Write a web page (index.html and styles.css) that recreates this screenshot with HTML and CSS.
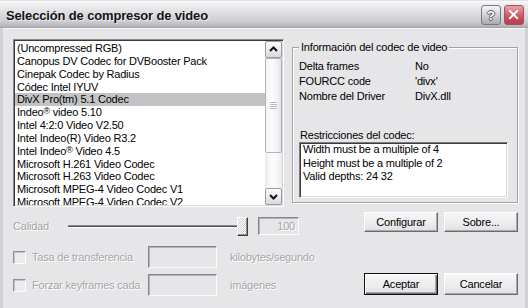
FILE: index.html
```html
<!DOCTYPE html>
<html lang="es">
<head>
<meta charset="utf-8">
<title>Selección de compresor de video</title>
<link rel="stylesheet" href="styles.css">
</head>
<body>
<div class="window">
  <div class="titlebar">
    <span class="title">Selección de compresor de video</span>
    <div class="caption-buttons">
      <span class="cap-btn help">?</span>
      <span class="cap-btn close">
        <svg width="20" height="20" viewBox="0 0 20 20"><path d="M5.5 5.5 L13.5 13.5 M13.5 5.5 L5.5 13.5" stroke="#fff" stroke-width="2.2" stroke-linecap="square" fill="none"/></svg>
      </span>
    </div>
  </div>
  <div class="frame">
    <div class="top">
      <div class="listbox">
        <ul class="items">
          <li>(Uncompressed RGB)</li>
          <li>Canopus DV Codec for DVBooster Pack</li>
          <li>Cinepak Codec by Radius</li>
          <li>Códec Intel IYUV</li>
          <li class="selected">DivX Pro(tm) 5.1 Codec</li>
          <li>Indeo<span class="reg">®</span> video 5.10</li>
          <li>Intel 4:2:0 Video V2.50</li>
          <li>Intel Indeo(R) Video R3.2</li>
          <li>Intel Indeo<span class="reg">®</span> Video 4.5</li>
          <li>Microsoft H.261 Video Codec</li>
          <li>Microsoft H.263 Video Codec</li>
          <li>Microsoft MPEG-4 Video Codec V1</li>
          <li>Microsoft MPEG-4 Video Codec V2</li>
        </ul>
        <div class="scrollbar">
          <div class="sb-btn">
            <svg width="15" height="15" viewBox="0 0 15 15"><path d="M4 9 L7.5 5.5 L11 9" stroke="#111" stroke-width="2" fill="none"/></svg>
          </div>
          <div class="sb-thumb"><span class="grip"></span></div>
          <div class="sb-track"></div>
          <div class="sb-btn">
            <svg width="15" height="15" viewBox="0 0 15 15"><path d="M4 6 L7.5 9.5 L11 6" stroke="#111" stroke-width="2" fill="none"/></svg>
          </div>
        </div>
      </div>
      <div class="group">
        <div class="legend">Información del codec de video</div>
        <div class="info">
          <span>Delta frames</span><span>No</span>
          <span>FOURCC code</span><span>'divx'</span>
          <span>Nombre del Driver</span><span>DivX.dll</span>
        </div>
        <div class="restr-label">Restricciones del codec:</div>
        <div class="restr-box">
          <div>Width must be a multiple of 4</div>
          <div>Height must be a multiple of 2</div>
          <div>Valid depths: 24 32</div>
        </div>
      </div>
    </div>
    <div class="bottom">
      <div class="controls">
        <div class="row row-quality">
          <span class="dis lbl-quality">Calidad</span>
          <div class="slider"><span class="track"></span><span class="thumb"></span></div>
          <span class="edit edit-q dis">100</span>
        </div>
        <div class="row row-rate">
          <span class="check"></span>
          <span class="dis lbl-check">Tasa de transferencia</span>
          <span class="edit edit-w"></span>
          <span class="dis unit">kilobytes/segundo</span>
        </div>
        <div class="row row-key">
          <span class="check"></span>
          <span class="dis lbl-check">Forzar keyframes cada</span>
          <span class="edit edit-w"></span>
          <span class="dis unit">imágenes</span>
        </div>
      </div>
      <div class="buttons">
        <button class="btn">Configurar</button>
        <button class="btn">Sobre...</button>
        <button class="btn default">Aceptar</button>
        <button class="btn">Cancelar</button>
      </div>
    </div>
  </div>
</div>
</body>
</html>
```

FILE: styles.css
```css
html, body {
  margin: 0;
  padding: 0;
}

body {
  width: 528px;
  height: 308px;
  overflow: hidden;
  font-family: "Liberation Sans", Arial, sans-serif;
  font-size: 11px;
  letter-spacing: -0.2px;
  color: #000;
}

.window {
  width: 528px;
  height: 308px;
  display: flex;
  flex-direction: column;
  background: #e6e6e8;
}

/* ---------- title bar ---------- */
.titlebar {
  flex: none;
  height: 28px;
  box-sizing: border-box;
  padding: 2px 4px 0 6px;
  display: flex;
  align-items: center;
  background: linear-gradient(#c8c8cc 0px, #fdfdfd 1px, #f2f2f4 3px, #e6e6e9 9px, #dadade 15px, #cdcdd2 21px, #bdbdc3 25px, #aeaeb4 27px, #9c9ca2 28px);
}

.title {
  flex: 1;
  margin-top: 1px;
  font-size: 13px;
  font-weight: bold;
  letter-spacing: -0.15px;
  color: #141414;
  text-shadow: 1px 1px 0 rgba(255, 255, 255, 0.6);
}

.caption-buttons {
  display: flex;
  gap: 3px;
}

.cap-btn {
  width: 20px;
  height: 20px;
  box-sizing: border-box;
  border-radius: 3px;
  display: flex;
  align-items: center;
  justify-content: center;
}

.help {
  border: 1px solid #7a7a82;
  background: linear-gradient(#f6f6f8, #d6d6da 45%, #b9b9c0 80%, #a9a9b0);
  font-size: 13px;
  font-weight: bold;
  color: #fff;
  letter-spacing: 0;
  text-shadow: -1px 0 #5a5a60, 1px 0 #5a5a60, 0 -1px #5a5a60, 0 1px #5a5a60;
}

.close {
  border: 1px solid #a4505a;
  background: linear-gradient(#eaa3aa, #d46b76 40%, #c44a58 70%, #b8404e);
}

.close svg {
  display: block;
}

/* ---------- frame ---------- */
.frame {
  flex: 1;
  display: flex;
  flex-direction: column;
  border-left: 3px solid #d2d2d6;
  border-right: 3px solid #d2d2d6;
  padding: 11px 7px 0 10px;
  box-shadow: inset 0 1px 0 #f6f6f8;
}

.top {
  flex: none;
  height: 172px;
  display: flex;
  align-items: flex-start;
  gap: 8px;
}

/* ---------- list box ---------- */
.listbox {
  width: 271px;
  height: 168px;
  box-sizing: border-box;
  padding: 1px;
  border: 1px solid;
  border-color: #8a8a8a #fdfdfd #fdfdfd #8a8a8a;
  box-shadow: inset 1px 1px 0 #3c3c3c, inset -1px -1px 0 #d8d8da;
  background: #fff;
  display: flex;
  overflow: hidden;
}

.items {
  flex: 1;
  margin: 0;
  padding: 1px 0 0 0;
  list-style: none;
  overflow: hidden;
  line-height: 12.85px;
  white-space: nowrap;
}

.items li {
  padding-left: 2px;
}

.items li.selected {
  background: #c3c3c5;
}

.reg {
  font-size: 9px;
  vertical-align: 2px;
  line-height: 0;
}

.scrollbar {
  width: 17px;
  flex: none;
  display: flex;
  flex-direction: column;
  background: linear-gradient(to right, #ebebee, #fbfbfc 35%, #fafafb 65%, #eaeaed);
}

.sb-btn {
  flex: none;
  height: 17px;
  box-sizing: border-box;
  border: 1px solid #9c9ca4;
  border-radius: 2px;
  background: linear-gradient(#fdfdfd, #e8e8ec 60%, #d8d8de);
  display: flex;
  align-items: center;
  justify-content: center;
}

.sb-btn svg {
  display: block;
}

.sb-thumb {
  flex: none;
  height: 95px;
  box-sizing: border-box;
  border: 1px solid #b2b2ba;
  border-radius: 2px;
  background: linear-gradient(to right, #f4f4f6, #fcfcfd 40%, #f0f0f3 80%, #e2e2e6);
  display: flex;
  align-items: center;
  justify-content: center;
}

.grip {
  width: 7px;
  height: 7px;
  background: repeating-linear-gradient(#b8b8c0 0 1px, #fff 1px 2px);
}

.sb-track {
  flex: 1;
}

/* ---------- group box ---------- */
.group {
  width: 226px;
  height: 156px;
  margin-top: 8px;
  box-sizing: border-box;
  padding: 0 8px 0 6px;
  border: 1px solid #a2a2a6;
  box-shadow: inset 1px 1px 0 #fff, 1px 1px 0 #fff;
}

.legend {
  display: table;
  margin: -7px 0 0 0;
  padding: 0 2px;
  line-height: 13px;
  background: #e6e6e8;
}

.info {
  margin-top: 5px;
  display: grid;
  grid-template-columns: 116px auto;
  line-height: 15px;
}

.restr-label {
  margin-top: 25px;
  padding-left: 1px;
  line-height: 13px;
}

.restr-box {
  width: 209px;
  height: 56px;
  box-sizing: border-box;
  padding: 0 3px;
  border: 1px solid;
  border-color: #7c7c7c #fdfdfd #fdfdfd #7c7c7c;
  box-shadow: inset 1px 1px 0 #3c3c3c, inset -1px -1px 0 #d8d8da;
  background: #fff;
  line-height: 13.5px;
}

/* ---------- bottom controls ---------- */
.bottom {
  flex: none;
  display: flex;
}

.controls {
  width: 351px;
  display: flex;
  flex-direction: column;
}

.row {
  display: flex;
  align-items: center;
}

.row-quality { height: 30px; }
.row-rate { height: 32px; }
.row-key { height: 24px; }

.dis {
  color: #a6a6a8;
  text-shadow: 1px 1px 0 #fff;
}

.lbl-quality {
  width: 55px;
  flex: none;
}

.slider {
  width: 180px;
  flex: none;
  display: flex;
  align-items: center;
}

.track {
  width: 177px;
  height: 1px;
  border-top: 1px solid #8c8c90;
  border-bottom: 1px solid #fff;
  background: #505054;
}

.thumb {
  width: 11px;
  height: 19px;
  margin-left: -8px;
  box-sizing: border-box;
  border: 1px solid;
  border-color: #fff #404040 #404040 #fff;
  box-shadow: inset -1px -1px 0 #8c8c8c;
  background: repeating-conic-gradient(#ffffff 0 25%, #d0d0d2 0 50%) 0 0 / 2px 2px;
}

.edit {
  flex: none;
  box-sizing: border-box;
  border: 1px solid;
  border-color: #858588 #fcfcfc #fcfcfc #858588;
  box-shadow: inset 1px 1px 0 #b4b4b8;
  background: #e6e6e8;
}

.edit-q {
  width: 41px;
  height: 18px;
  margin-left: 10px;
  padding-right: 3px;
  text-align: right;
  line-height: 16px;
}

.edit-w {
  width: 69px;
  height: 22px;
}

.check {
  flex: none;
  width: 13px;
  height: 13px;
  box-sizing: border-box;
  margin-right: 6px;
  border: 1px solid;
  border-color: #909094 #fdfdfd #fdfdfd #909094;
  box-shadow: inset 1px 1px 0 #c4c4c8;
  background: #ececee;
}

.lbl-check {
  width: 116px;
  flex: none;
  white-space: nowrap;
}

.unit {
  margin-left: 13px;
  white-space: nowrap;
}

/* ---------- buttons ---------- */
.buttons {
  width: 154px;
  padding-top: 1px;
  display: grid;
  grid-template-columns: 74px 74px;
  grid-template-rows: 20px 22px;
  column-gap: 6px;
  row-gap: 41px;
  align-content: start;
}

.btn {
  margin: 0;
  padding: 0;
  font: inherit;
  letter-spacing: inherit;
  color: #000;
  box-sizing: border-box;
  border: 1px solid;
  border-color: #ffffff #6c6c70 #6c6c70 #ffffff;
  box-shadow: inset -1px -1px 0 #a8a8ac;
  background: linear-gradient(#f6f6f7, #ececee 60%, #e0e0e3);
}

.btn.default {
  border: 1px solid #111;
  box-shadow: inset 1px 1px 0 #fff, inset -1px -1px 0 #6c6c70, inset -2px -2px 0 #a8a8ac;
}
```
